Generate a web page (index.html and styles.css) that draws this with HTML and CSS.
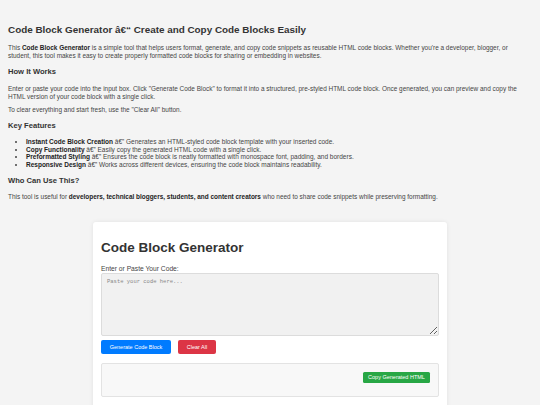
FILE: index.html
```html
<!DOCTYPE html>
<html>
<head>
<meta charset="utf-8">
<link rel="stylesheet" href="styles.css">
</head>
<body>
<div class="intro">
  <h1>Code Block Generator â€&#8220; Create and Copy Code Blocks Easily</h1>
  <p class="p1">This <strong>Code Block Generator</strong> is a simple tool that helps users format, generate, and copy code snippets as reusable HTML code blocks. Whether you're a developer, blogger, or student, this tool makes it easy to create properly formatted code blocks for sharing or embedding in websites.</p>
  <h3>How It Works</h3>
  <p class="p2">Enter or paste your code into the input box. Click "Generate Code Block" to format it into a structured, pre-styled HTML code block. Once generated, you can preview and copy the HTML version of your code block with a single click.</p>
  <p class="p3">To clear everything and start fresh, use the "Clear All" button.</p>
  <h3>Key Features</h3>
  <ul>
    <li><strong>Instant Code Block Creation</strong> â€&#8221; Generates an HTML-styled code block template with your inserted code.</li>
    <li><strong>Copy Functionality</strong> â€&#8221; Easily copy the generated HTML code with a single click.</li>
    <li><strong>Preformatted Styling</strong> â€&#8221; Ensures the code block is neatly formatted with monospace font, padding, and borders.</li>
    <li><strong>Responsive Design</strong> â€&#8221; Works across different devices, ensuring the code block maintains readability.</li>
  </ul>
  <h3>Who Can Use This?</h3>
  <p class="p4">This tool is useful for <strong>developers, technical bloggers, students, and content creators</strong> who need to share code snippets while preserving formatting.</p>
</div>

<div class="card">
  <h2>Code Block Generator</h2>
  <label class="label" for="code">Enter or Paste Your Code:</label>
  <textarea id="code" class="input" placeholder="Paste your code here..."></textarea>
  <div class="actions">
    <button class="btn btn-blue">Generate Code Block</button>
    <button class="btn btn-red">Clear All</button>
  </div>
  <div class="output">
    <button class="btn-copy">Copy Generated HTML</button>
  </div>
</div>
</body>
</html>
```

FILE: styles.css
```css
html, body {
  margin: 0;
  background: #f4f4f4;
}
body {
  padding: 0 8px;
  font-family: "Liberation Sans", Arial, sans-serif;
  font-size: 6.45px;
  line-height: 8px;
  color: #444;
  height: 405px;
  overflow: hidden;
}
.intro {
  padding-top: 23px;
  padding-right: 14px;
}
h1 {
  margin: 0;
  font-size: 9.9px;
  line-height: 14px;
  font-weight: bold;
  color: #333;
}
h3 {
  margin: 0;
  font-size: 7.6px;
  line-height: 10px;
  font-weight: bold;
  color: #333;
}
p { margin: 0; }
strong { color: #222; }
.p1 { margin-top: 7px; }
.intro h3 { margin-top: 7px; }
.p2 { margin-top: 8px; }
.p3 { margin-top: 5px; }
ul {
  margin: 7px 0 0;
  padding-left: 18px;
  font-size: 6.5px;
  line-height: 7.7px;
}
.p4 { margin-top: 7px; }

.card {
  width: 338px;
  margin: 21px auto 0;
  padding: 10px 8px 20px;
  background: #fff;
  border-radius: 3px;
  box-shadow: 0 0 4px rgba(0,0,0,0.08);
}
.card h2 {
  margin: 8px 0 0;
  font-size: 13.5px;
  line-height: 16px;
  font-weight: bold;
  color: #333;
}
.label {
  display: block;
  margin-top: 9px;
  font-size: 6.7px;
  line-height: 8px;
}
.input {
  display: block;
  box-sizing: border-box;
  width: 338px;
  height: 63px;
  margin: 0;
  padding: 4px 5px;
  background: #f1f1f1;
  border: 1px solid #dcdcdc;
  border-radius: 2px;
  font-family: "Liberation Mono", monospace;
  font-size: 5.5px;
  line-height: 7px;
  resize: vertical;
}
.input::placeholder { color: #888; }
.actions {
  display: flex;
  gap: 7px;
  margin-top: 4px;
}
.btn {
  height: 14px;
  padding: 0;
  border: none;
  border-radius: 2px;
  color: #fff;
  font-family: "Liberation Sans", Arial, sans-serif;
  font-size: 5.5px;
}
.btn-blue { width: 70px; background: #007bff; }
.btn-red { width: 38px; background: #dc3545; }
.output {
  box-sizing: border-box;
  height: 34px;
  margin-top: 9px;
  padding: 8px 8px;
  display: flex;
  justify-content: flex-end;
  align-items: flex-start;
  background: #f8f8f8;
  border: 1px solid #e3e3e3;
  border-radius: 2px;
}
.btn-copy {
  width: 67px;
  height: 11px;
  padding: 0;
  border: none;
  border-radius: 1.5px;
  background: #28a745;
  color: #fff;
  font-family: "Liberation Sans", Arial, sans-serif;
  font-size: 5.5px;
}
```
